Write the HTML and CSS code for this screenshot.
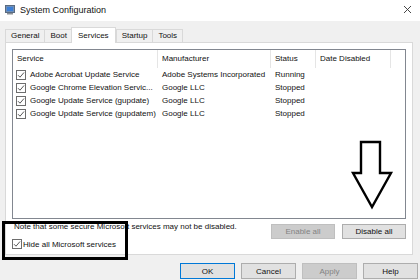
FILE: index.html
```html
<!DOCTYPE html>
<html lang="en">
<head>
    <meta charset="UTF-8">
    <title>System Configuration</title>
    <link rel="stylesheet" href="styles.css">
</head>
<body>
    <div class="titlebar">
        <svg class="app-icon" width="10" height="10" viewBox="0 0 10 10">
            <rect x="0.5" y="0.5" width="9" height="7" fill="#6f8fb8" stroke="#5a6b80"/>
            <rect x="2" y="2" width="6" height="4" fill="#3d7fd6"/>
            <rect x="2" y="8" width="6" height="1.5" fill="#8a8f96"/>
        </svg>
        <span class="title">System Configuration</span>
        <svg class="close" width="9" height="9" viewBox="0 0 9 9">
            <path d="M1 1 L8 8 M8 1 L1 8" stroke="#333" stroke-width="0.9"/>
        </svg>
    </div>

    <div class="tabs">
        <div class="tab">General</div>
        <div class="tab">Boot</div>
        <div class="tab active">Services</div>
        <div class="tab">Startup</div>
        <div class="tab">Tools</div>
    </div>

    <div class="panel">
        <div class="list">
            <div class="row head">
                <div class="cell">Service</div>
                <div class="cell">Manufacturer</div>
                <div class="cell">Status</div>
                <div class="cell">Date Disabled</div>
                <div class="cell"></div>
            </div>
            <div class="row">
                <div class="cell svc"><span class="check"></span>Adobe Acrobat Update Service</div>
                <div class="cell">Adobe Systems Incorporated</div>
                <div class="cell">Running</div>
                <div class="cell"></div>
            </div>
            <div class="row">
                <div class="cell svc"><span class="check"></span>Google Chrome Elevation Servic...</div>
                <div class="cell">Google LLC</div>
                <div class="cell">Stopped</div>
                <div class="cell"></div>
            </div>
            <div class="row">
                <div class="cell svc"><span class="check"></span>Google Update Service (gupdate)</div>
                <div class="cell">Google LLC</div>
                <div class="cell">Stopped</div>
                <div class="cell"></div>
            </div>
            <div class="row">
                <div class="cell svc"><span class="check"></span>Google Update Service (gupdatem)</div>
                <div class="cell">Google LLC</div>
                <div class="cell">Stopped</div>
                <div class="cell"></div>
            </div>
        </div>

        <div class="panel-foot">
            <div class="note">Note that some secure Microsoft services may not be disabled.</div>
            <div class="foot-buttons">
                <button class="btn" disabled>Enable all</button>
                <button class="btn">Disable all</button>
            </div>
            <div class="hide-ms"><span class="check"></span>Hide all Microsoft services</div>
        </div>
    </div>

    <div class="actions">
        <button class="btn default">OK</button>
        <button class="btn">Cancel</button>
        <button class="btn" disabled>Apply</button>
        <button class="btn">Help</button>
    </div>

    <div class="callout"></div>
    <svg class="arrow" width="45" height="72" viewBox="0 0 45 72">
        <path d="M11 2 H30 V33 H41 L22 67 L3 33 H11 Z" fill="#fff" stroke="#000" stroke-width="2.4" stroke-linejoin="miter"/>
    </svg>
</body>
</html>
```

FILE: styles.css
```css
body {
    margin: 0;
    width: 420px;
    height: 280px;
    overflow: hidden;
    position: relative;
    background-color: #f0f0f0;
    font-family: "Liberation Sans", Arial, sans-serif;
    font-size: 8px;
    color: #111;
}
.titlebar {
    height: 19px;
    background-color: #fff;
    display: flex;
    align-items: center;
    padding: 0 8px 2px 5px;
}
.app-icon {
    margin-right: 5px;
}
.title {
    font-size: 9px;
    flex: 1;
}
.tabs {
    display: flex;
    align-items: flex-end;
    height: 21px;
    padding-left: 5px;
    box-sizing: border-box;
    position: relative;
    z-index: 1;
}
.tab {
    height: 13px;
    line-height: 11px;
    padding: 0 5px;
    border: 1px solid #d9d9d9;
    border-bottom: none;
    margin-right: -1px;
    box-sizing: border-box;
}
.tab.active {
    background-color: #fff;
    height: 16px;
    line-height: 15px;
    padding: 0 6px;
    margin-bottom: -1px;
    margin-left: -1px;
    margin-right: 0;
}
.panel {
    margin: 0 7px 0 5px;
    height: 213px;
    box-sizing: border-box;
    background-color: #fff;
    border: 1px solid #d9d9d9;
    padding: 6px 6px 0 6px;
}
.list {
    height: 170px;
    box-sizing: border-box;
    border: 1px solid #828790;
}
.row {
    display: grid;
    grid-template-columns: 145px 113px 45px 75px 1fr;
    height: 13px;
    line-height: 13px;
    white-space: nowrap;
}
.row.head {
    height: 18px;
    line-height: 18px;
}
.row.head .cell {
    border-right: 1px solid #e5e5e5;
}
.row.head .cell:last-child {
    border-right: none;
}
.cell {
    padding-left: 4px;
    overflow: hidden;
}
.cell.svc {
    padding-left: 3px;
    display: flex;
    align-items: center;
}
.check {
    width: 10px;
    height: 10px;
    box-sizing: border-box;
    border: 1px solid #6d6d6d;
    margin-right: 4px;
    flex: none;
    background: no-repeat center/8px 8px url("data:image/svg+xml;utf8,<svg xmlns='http://www.w3.org/2000/svg' viewBox='0 0 8 8'><path d='M1 4.2 L3 6.2 L7 1.5' fill='none' stroke='%23444' stroke-width='0.9'/></svg>");
}
.panel-foot {
    display: grid;
    grid-template-columns: 1fr auto;
    grid-template-rows: 16px auto;
    margin-top: 3px;
}
.note {
    padding-left: 2px;
    line-height: 10px;
}
.foot-buttons {
    display: flex;
    gap: 7px;
    padding-top: 2px;
}
.foot-buttons .btn {
    width: 64px;
    height: 15px;
}
.hide-ms {
    display: flex;
    align-items: center;
    margin-top: 1px;
    grid-column: 1;
}
.hide-ms .check {
    margin-right: 1px;
}
.btn {
    font-family: "Liberation Sans", Arial, sans-serif;
    font-size: 8px;
    color: #111;
    background-color: #e1e1e1;
    border: 1px solid #adadad;
    padding: 0;
    box-sizing: border-box;
}
.btn:disabled {
    background-color: #cccccc;
    border-color: #bfbfbf;
    color: #838383;
}
.btn.default {
    border-color: #0078d7;
}
.actions {
    display: flex;
    justify-content: flex-end;
    gap: 6px;
    margin-top: 8px;
    padding-right: 2px;
}
.actions .btn {
    width: 55px;
    height: 16px;
}
.callout {
    position: absolute;
    left: 2px;
    top: 221px;
    width: 126px;
    height: 39px;
    box-sizing: border-box;
    border: 3px solid #000;
}
.arrow {
    position: absolute;
    left: 350px;
    top: 140px;
}
```
